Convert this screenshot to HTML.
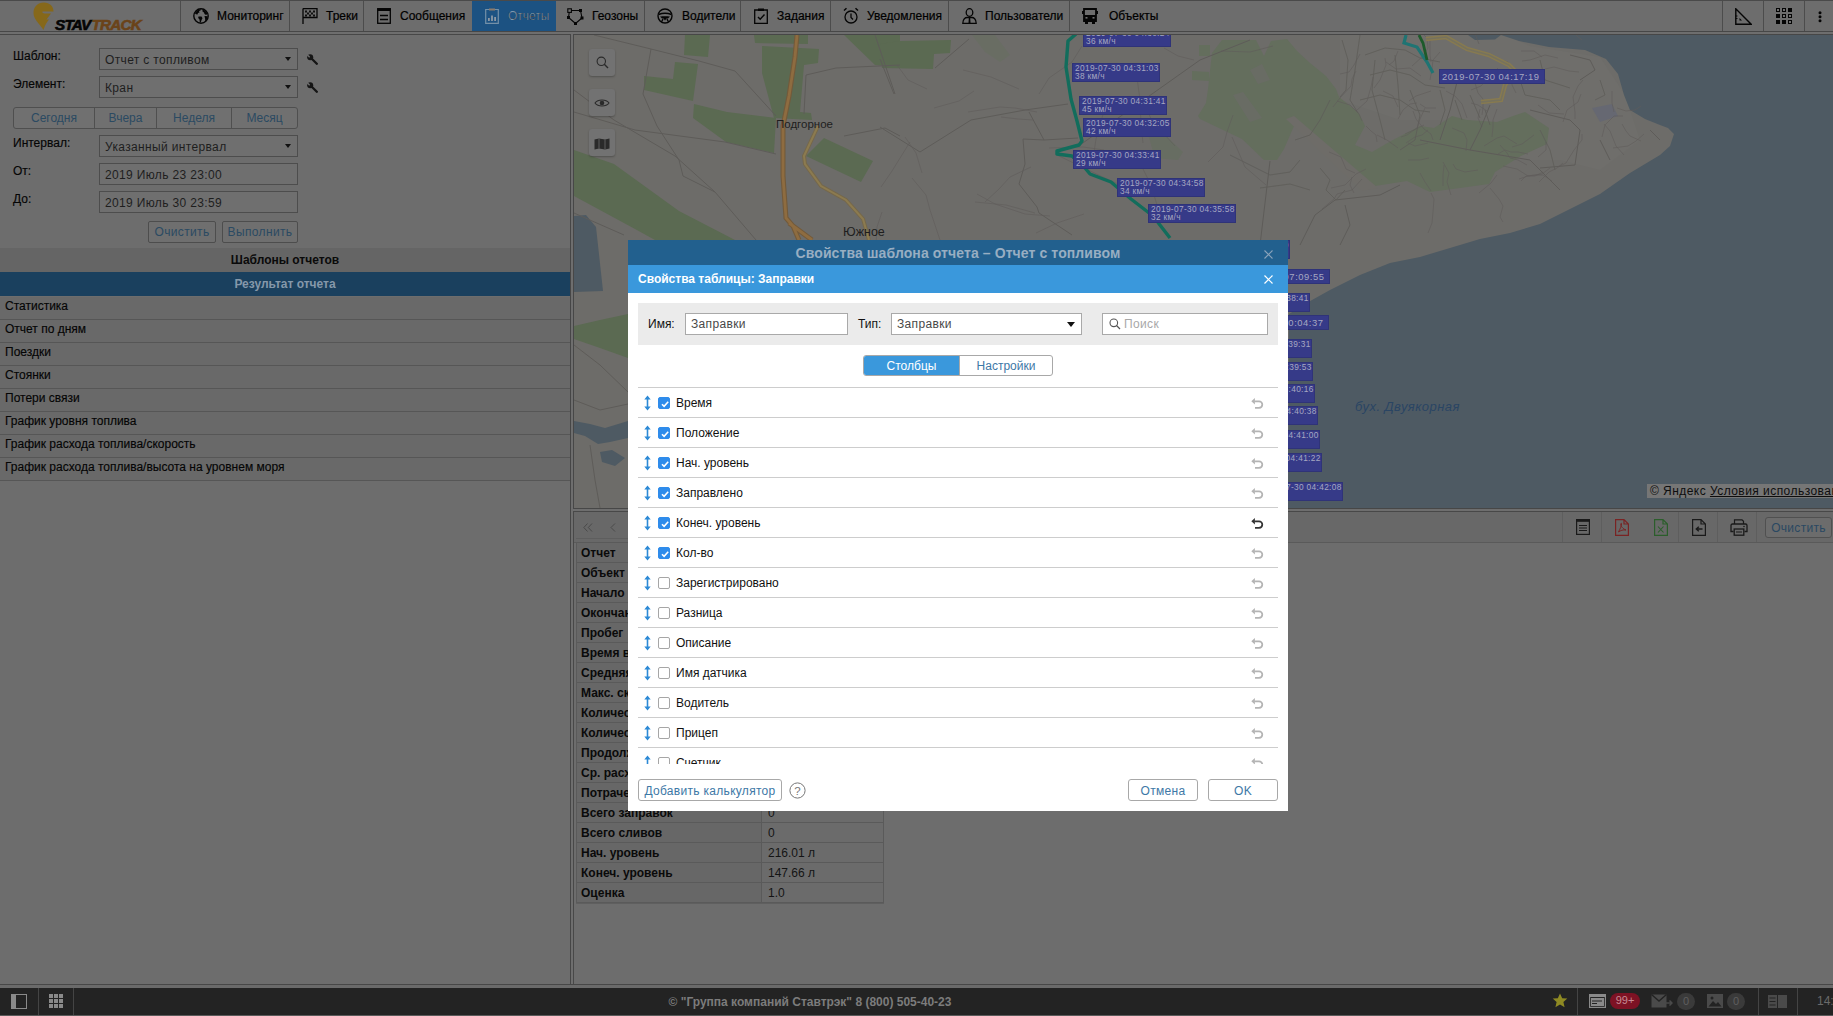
<!DOCTYPE html>
<html><head><meta charset="utf-8">
<style>
*{box-sizing:border-box;margin:0;padding:0}
html,body{width:1833px;height:1016px;overflow:hidden;background:#6e6e6e;font-family:"Liberation Sans",sans-serif;font-size:12px;color:#000}
.a{position:absolute}
/* nav */
#nav{left:0;top:0;width:1833px;height:32px;background:#6d6d6d;border-bottom:1px solid #474747}
.sep{position:absolute;top:1px;width:1px;height:30px;background:#4c4c4c}
.ni{position:absolute;top:9px;font-size:12px;color:#000;white-space:nowrap;-webkit-text-stroke:0.2px #000}
.ic{position:absolute}
/* left panel */
#lp{left:0;top:34px;width:571px;height:950px;background:#6d6d6d;border-top:1px solid #474747;border-right:1px solid #464646}
.lbl{position:absolute;left:13px;color:#050505;-webkit-text-stroke:0.15px #050505}
.inp{position:absolute;left:99px;width:199px;height:22px;border:1px solid #4d4d4d;background:#6f6f6f;color:#1e1e1e;padding:4px 0 0 5px;white-space:nowrap;letter-spacing:0.35px}
.dd{position:absolute;right:6px;top:8px;width:0;height:0;border-left:3px solid transparent;border-right:3px solid transparent;border-top:4px solid #111}
.btn{position:absolute;border:1px solid #4d4d4d;border-radius:2px;background:#6f6f6f;color:#2b4a62;text-align:center;letter-spacing:0.35px}
.li{position:absolute;left:0;width:570px;height:23px;background:#696969;border-bottom:1px solid #565656;padding:2px 0 0 5px;color:#050505;-webkit-text-stroke:0.15px #050505}
.th{left:2px;width:186px;height:20px;background:#676767;border:1px solid #5a5a5a;border-top:none;font-weight:bold;padding:3px 0 0 4px;color:#0a0a0a;white-space:nowrap;overflow:hidden}
.td{left:188px;width:122px;height:20px;background:#6b6b6b;border:1px solid #5a5a5a;border-top:none;border-left:none;padding:3px 0 0 6px;color:#141414}
.lbs{width:88px;height:19px;background:#363a88;border:1px solid #2f3378;color:#a6a8c2;font-size:8.3px;line-height:7.6px;padding:1px 0 0 2px;white-space:nowrap;overflow:hidden;letter-spacing:0.35px}
.lbb{height:15px;background:#363a88;border:1px solid #2f3378;color:#a6a8c2;font-size:9.4px;line-height:13px;padding:0 4px 0 2px;white-space:nowrap;letter-spacing:0.55px}
.dinp{height:22px;border:1px solid #a9a9a9;background:#fff;color:#484848;padding:3px 0 0 5px;letter-spacing:0.35px;white-space:nowrap}
.row{position:absolute;left:0;width:640px;height:30px;border-bottom:1px solid #cdcdcd}
.cbx{position:absolute;left:20px;top:9px;width:12px;height:12px;border:1px solid #a6a6a6;border-radius:2px;background:#fff}
.cbx.on{background:#2f8ceb;border-color:#2f8ceb}
.dbtn{height:22px;border:1px solid #a8a8a8;border-radius:3px;background:#fff;color:#3d78a6;text-align:center;padding-top:4px;letter-spacing:0.3px;white-space:nowrap}
</style></head><body>

<!-- NAV -->
<div id="nav" class="a">
  <div class="a" style="left:0;top:0;width:1833px;height:1px;background:#4a4a4a"></div>
  <!-- logo -->
  <svg class="ic" style="left:32px;top:1px" width="26" height="30" viewBox="0 0 26 30">
    <path d="M12 1.5 C5.5 1.5 1.5 6 1.5 12 C1.5 18 7 22 11.5 29 C13 24 15 21 17 18.5 L14.5 18.5 L19 12.5 L13 12.5 C11 12.5 10 11.5 10.5 10.5 L21.5 10.5 C21.5 5 17.5 1.5 12 1.5 Z" fill="#86681a"/>
  </svg>
  <div class="a" style="left:55px;top:17px;font:italic bold 14px 'Liberation Sans',sans-serif;letter-spacing:-0.7px;color:#050505;transform:scale(1.09,0.98);transform-origin:0 0;-webkit-text-stroke:0.6px #050505">STAV<span style="color:#6a4319;-webkit-text-stroke:0.6px #6a4319;margin-left:1px">TRACK</span></div>
  <div class="sep" style="left:180px"></div>
  <!-- globe -->
  <svg class="ic" style="left:193px;top:8px" width="16" height="16" viewBox="0 0 16 16">
    <circle cx="8" cy="8" r="7.2" fill="none" stroke="#050505" stroke-width="1.4"/>
    <path d="M2 5.5 C3 3 5 1.5 8 1.2 L7.5 2.5 L6 3 L6.5 4.5 L5 5 L4.5 6.5 L3 6.2 Z M5.5 8.5 L8.5 8.5 L9.5 10.2 L8.5 12 L7.8 14.5 L6.8 14.3 L6.5 11.5 L5.2 10 Z M9.5 1.5 C11.5 2 13.5 3.5 14.5 6 L13 7 L11.5 6 L11 4.5 L9.5 3.5 Z M11.5 8 L14.7 8.2 C14.6 10.5 13.5 12.5 12 13.5 L12.2 11 Z" fill="#050505"/>
  </svg>
  <div class="ni" style="left:217px">Мониторинг</div>
  <div class="sep" style="left:289px"></div>
  <!-- flag -->
  <svg class="ic" style="left:302px;top:8px" width="16" height="16" viewBox="0 0 16 16">
    <path d="M1 0.5 V16 M1 0.6 H15 V9.5 H1" fill="none" stroke="#050505" stroke-width="1.3"/>
    <path d="M3 2.5h2v2h-2z M7 2.5h2v2h-2z M11 2.5h2v2h-2z M5 4.5h2v2h-2z M9 4.5h2v2h-2z M3 6.5h2v2h-2z M7 6.5h2v2h-2z M11 6.5h2v2h-2z" fill="#050505" opacity=".9"/>
  </svg>
  <div class="ni" style="left:326px">Треки</div>
  <div class="sep" style="left:363px"></div>
  <!-- messages -->
  <svg class="ic" style="left:377px;top:8px" width="14" height="16" viewBox="0 0 14 16">
    <rect x="0.7" y="0.7" width="12.6" height="14.6" fill="none" stroke="#050505" stroke-width="1.3"/>
    <rect x="0.7" y="0.7" width="12.6" height="2.3" fill="#050505"/>
    <path d="M3 7.5 H11 M3 11.5 H11" stroke="#050505" stroke-width="1.3"/>
  </svg>
  <div class="ni" style="left:400px">Сообщения</div>
  <!-- reports (active) -->
  <div class="a" style="left:472px;top:1px;width:84px;height:30px;background:#1c5282"></div>
  <svg class="ic" style="left:485px;top:8px" width="14" height="16" viewBox="0 0 14 16">
    <path d="M0.7 1.5 H13.3 V15.3 H0.7 Z" fill="none" stroke="#7390a8" stroke-width="1.2"/>
    <path d="M4 0.5 H10 V2.5 H4 Z" fill="#8c7a6a"/>
    <path d="M3 10h1.8v3h-1.8z M6.1 7.5h1.8v5.5h-1.8z M9.2 9h1.8v4h-1.8z" fill="#8c98a5"/>
  </svg>
  <div class="ni" style="left:508px;color:#7f98ae">Отчеты</div>
  <!-- geozones -->
  <svg class="ic" style="left:567px;top:8px" width="17" height="17" viewBox="0 0 17 17">
    <path d="M2.5 2.5 L13.5 2.5 L15 10 L8.5 15.5 L1.5 9.5 Z" fill="none" stroke="#050505" stroke-width="1.1"/>
    <rect x="0.8" y="0.8" width="3.6" height="3.6" fill="#6f6f6f" stroke="#050505" stroke-width="1.1"/>
    <rect x="12" y="1" width="3" height="3" fill="#050505"/>
    <rect x="13.5" y="8.5" width="3" height="3" fill="#050505"/>
    <rect x="7" y="14" width="3" height="3" fill="#050505"/>
    <rect x="0" y="8" width="3" height="3" fill="#050505"/>
  </svg>
  <div class="ni" style="left:592px">Геозоны</div>
  <div class="sep" style="left:644px"></div>
  <!-- drivers -->
  <svg class="ic" style="left:657px;top:8px" width="16" height="16" viewBox="0 0 16 16">
    <circle cx="8" cy="8" r="7" fill="none" stroke="#050505" stroke-width="1.4"/>
    <path d="M1.5 6.5 C5 5.2 11 5.2 14.5 6.5" fill="none" stroke="#050505" stroke-width="1.6"/>
    <path d="M3 8.5 C5 8.2 11 8.2 13 8.5 L11 10.5 H9.5 L8 12.5 L6.5 10.5 H5 Z" fill="#050505"/>
    <path d="M6 11 L4.5 14 M10 11 L11.5 14" stroke="#050505" stroke-width="1.4"/>
  </svg>
  <div class="ni" style="left:682px">Водители</div>
  <div class="sep" style="left:740px"></div>
  <!-- tasks -->
  <svg class="ic" style="left:754px;top:8px" width="14" height="16" viewBox="0 0 14 16">
    <path d="M0.7 2 H13.3 V15.3 H0.7 Z" fill="none" stroke="#050505" stroke-width="1.3"/>
    <path d="M4 0.5 H10 V3 H4 Z" fill="#050505"/>
    <path d="M4 9 L6.2 11.3 L10.5 6.5" fill="none" stroke="#050505" stroke-width="1.4"/>
  </svg>
  <div class="ni" style="left:777px">Задания</div>
  <div class="sep" style="left:830px"></div>
  <!-- notifications -->
  <svg class="ic" style="left:843px;top:7px" width="16" height="17" viewBox="0 0 16 17">
    <circle cx="8" cy="10" r="6" fill="none" stroke="#050505" stroke-width="1.3"/>
    <path d="M8 6.5 V10.5 L10 12.5" fill="none" stroke="#050505" stroke-width="1.3"/>
    <path d="M1 3.5 L3.5 1.2 M15 3.5 L12.5 1.2" stroke="#050505" stroke-width="1.5"/>
  </svg>
  <div class="ni" style="left:867px">Уведомления</div>
  <div class="sep" style="left:948px"></div>
  <!-- users -->
  <svg class="ic" style="left:962px;top:8px" width="15" height="16" viewBox="0 0 15 16">
    <ellipse cx="7.5" cy="4.5" rx="3.3" ry="3.8" fill="none" stroke="#050505" stroke-width="1.3"/>
    <path d="M0.8 15.3 C0.8 11 3.5 9.5 5 9.5 H10 C11.5 9.5 14.2 11 14.2 15.3 Z" fill="none" stroke="#050505" stroke-width="1.3"/>
    <path d="M6.8 10 H8.2 L8.5 15 H6.5 Z" fill="#050505"/>
  </svg>
  <div class="ni" style="left:985px">Пользователи</div>
  <div class="sep" style="left:1069px"></div>
  <!-- objects -->
  <svg class="ic" style="left:1082px;top:8px" width="16" height="16" viewBox="0 0 16 16">
    <path d="M2 1 H14 V13 H2 Z" fill="none" stroke="#050505" stroke-width="1.8"/>
    <path d="M2 7 H14 V13 H2 Z" fill="#050505"/>
    <path d="M0 3 H2 V6 H0 Z M14 3 H16 V6 H14 Z M3 13 H6 V16 H3 Z M10 13 H13 V16 H10 Z" fill="#050505"/>
    <rect x="3.5" y="9" width="2" height="1.6" fill="#6f6f6f"/><rect x="10.5" y="9" width="2" height="1.6" fill="#6f6f6f"/>
  </svg>
  <div class="ni" style="left:1109px">Объекты</div>
  <!-- right -->
  <div class="sep" style="left:1722px"></div>
  <svg class="ic" style="left:1735px;top:8px" width="17" height="17" viewBox="0 0 17 17">
    <path d="M0.8 0.8 V16.2 H16.2 Z" fill="none" stroke="#050505" stroke-width="1.4"/>
    <path d="M4.5 10 L4.5 12.5 L7 12.5 Z" fill="#050505"/>
    <path d="M0.8 8 H2.5 M0.8 10.5 H2.5" stroke="#050505" stroke-width="0.9"/>
  </svg>
  <div class="sep" style="left:1763px"></div>
  <svg class="ic" style="left:1776px;top:8px" width="17" height="17" viewBox="0 0 17 17">
    <g fill="#050505">
    <rect x="0" y="0" width="4" height="4"/><rect x="6" y="0" width="4" height="4"/><rect x="12" y="0" width="4" height="4"/>
    <rect x="0" y="6" width="4" height="4"/><rect x="6" y="6" width="4" height="4"/><rect x="12" y="6" width="4" height="4"/>
    <rect x="0" y="12" width="4" height="4"/><rect x="6" y="12" width="4" height="4"/><rect x="12" y="12" width="4" height="4"/>
    </g>
    <g fill="#8c8c8c"><rect x="1.1" y="1.1" width="1.8" height="1.8"/><rect x="7.1" y="1.1" width="1.8" height="1.8"/><rect x="7.1" y="7.1" width="1.8" height="1.8"/><rect x="13.1" y="7.1" width="1.8" height="1.8"/><rect x="13.1" y="13.1" width="1.8" height="1.8"/></g>
  </svg>
  <div class="sep" style="left:1804px"></div>
  <svg class="ic" style="left:1817px;top:11px" width="6" height="12" viewBox="0 0 6 12">
    <circle cx="3" cy="1.7" r="1.5" fill="#050505"/><circle cx="3" cy="5.7" r="1.5" fill="#050505"/><circle cx="3" cy="9.7" r="1.5" fill="#050505"/>
  </svg>
</div>


<!-- LEFT PANEL -->
<div id="lp" class="a">
  <div class="lbl" style="top:14px">Шаблон:</div>
  <div class="inp" style="top:13px">Отчет с топливом<div class="dd"></div></div>
  <svg class="ic" style="left:306px;top:18px" width="12" height="12" viewBox="0 0 12 12"><path d="M5.5 5.5 L10.8 10.8" stroke="#151515" stroke-width="2.3" stroke-linecap="round"/><circle cx="4.2" cy="4.2" r="3" fill="#151515"/><path d="M1.2 1.8 L3.2 3.8" stroke="#6d6d6d" stroke-width="1.6" stroke-linecap="round"/></svg>
  <div class="lbl" style="top:42px">Элемент:</div>
  <div class="inp" style="top:41px">Кран<div class="dd"></div></div>
  <svg class="ic" style="left:306px;top:46px" width="12" height="12" viewBox="0 0 12 12"><path d="M5.5 5.5 L10.8 10.8" stroke="#151515" stroke-width="2.3" stroke-linecap="round"/><circle cx="4.2" cy="4.2" r="3" fill="#151515"/><path d="M1.2 1.8 L3.2 3.8" stroke="#6d6d6d" stroke-width="1.6" stroke-linecap="round"/></svg>
  <div class="a" style="left:13px;top:72px;width:285px;height:22px;border:1px solid #4f4f4f;border-radius:3px;background:#707070">
    <div class="a" style="left:0;top:0;width:81px;height:20px;border-right:1px solid #4f4f4f;color:#2b4a62;text-align:center;padding-top:3px">Сегодня</div>
    <div class="a" style="left:81px;top:0;width:62px;height:20px;border-right:1px solid #4f4f4f;color:#2b4a62;text-align:center;padding-top:3px">Вчера</div>
    <div class="a" style="left:143px;top:0;width:75px;height:20px;border-right:1px solid #4f4f4f;color:#2b4a62;text-align:center;padding-top:3px">Неделя</div>
    <div class="a" style="left:218px;top:0;width:65px;height:20px;color:#2b4a62;text-align:center;padding-top:3px">Месяц</div>
  </div>
  <div class="lbl" style="top:101px">Интервал:</div>
  <div class="inp" style="top:100px">Указанный интервал<div class="dd"></div></div>
  <div class="lbl" style="top:129px">От:</div>
  <div class="inp" style="top:128px">2019 Июль 23 23:00</div>
  <div class="lbl" style="top:157px">До:</div>
  <div class="inp" style="top:156px">2019 Июль 30 23:59</div>
  <div class="btn" style="left:148px;top:186px;width:68px;height:22px;padding-top:3px">Очистить</div>
  <div class="btn" style="left:222px;top:186px;width:76px;height:22px;padding-top:3px">Выполнить</div>
  <div class="a" style="left:0;top:213px;width:570px;height:24px;background:#656565;text-align:center;font-weight:bold;padding-top:5px;color:#0a0a0a">Шаблоны отчетов</div>
  <div class="a" style="left:0;top:237px;width:570px;height:24px;background:#1a405e;text-align:center;font-weight:bold;padding-top:5px;color:#8598aa">Результат отчета</div>
  <div class="li" style="top:262px">Статистика</div>
  <div class="li" style="top:285px">Отчет по дням</div>
  <div class="li" style="top:308px">Поездки</div>
  <div class="li" style="top:331px">Стоянки</div>
  <div class="li" style="top:354px">Потери связи</div>
  <div class="li" style="top:377px">График уровня топлива</div>
  <div class="li" style="top:400px">График расхода топлива/скорость</div>
  <div class="li" style="top:423px">График расхода топлива/высота на уровнем моря</div>
</div>


<!-- MAP -->
<div id="map" class="a" style="left:573px;top:34px;width:1260px;height:475px;background:#6d6c69;border-top:1px solid #474747;border-left:1px solid #474747;border-bottom:1px solid #474747;overflow:hidden">
<svg class="a" style="left:0;top:0" width="1260" height="474" viewBox="574 35 1260 474">
 <rect x="574" y="35" width="1260" height="474" fill="#6d6c69"/>
 <!-- urban tint -->
 <path d="M1340 35 L1505 35 L1530 46 L1600 57 L1625 95 L1640 140 L1600 170 L1560 160 L1520 160 L1470 120 L1400 120 L1340 100 Z" fill="#6f6e6b"/>
 <!-- sea -->
 <path d="M1468 35 L1501 35 L1519 41 L1549 47 L1585 50 L1606 59 L1618 74 L1624 95 L1630 110 L1645 119 L1660 125 L1668 128 L1674 134 L1670 146 L1660 155 L1630 173 L1600 194 L1570 209 L1540 224 L1510 233 L1480 239 L1450 248 L1420 257 L1390 263 L1360 275 L1330 290 L1312 300 L1289 314 L1288 509 L1834 509 L1834 35 Z" fill="#4e5a63"/>
 <path d="M1468 35 L1501 35 L1495 39.5 L1475 40 Z" fill="#4e5a63"/>
 <!-- green fields -->
 <g fill="#5b6a52">
  <path d="M685 35 L710 35 L708 57 L684 55 Z"/>
  <path d="M644 76 L673 79 L675 62 L698 64 L693 101 L644 90 Z"/>
  <path d="M694 104 L727 112 L776 118 L774 153 L726 142 L693 118 Z"/>
  <path d="M762 46 L819 49 L818 63 L804 65 L800 112 L811 113 L812 120 L774 118 L762 73 Z"/>
  <path d="M754 35 L808 35 L808 44 L755 43 Z"/>
  <path d="M824 138 L873 161 L861 182 L806 156 Z"/>
  <path d="M844 35 L900 35 L900 67 L875 65 Z"/>
  <path d="M574 150 L614 164 L679 211 L735 240 L760 260 L700 270 L655 240 L635 229 L574 196 Z"/>
  <path d="M880 44 L900 41 L951 40 L950 53 L934 54 L933 69 L882 68 Z"/>
  <path d="M574 326 L600 320 L628 314 L628 358 L600 348 L574 339 Z"/>
 </g>
 <g fill="#646e5d">
  <path d="M1198 116 L1206 103 L1208 89 L1212 53 L1222 40 L1256 40 L1264 56 L1271 41 L1287 39 L1297 51 L1310 63 L1326 76 L1336 89 L1339 97 L1359 113 L1365 126 L1355 145 L1372 152 L1391 141 L1420 126 L1434 128 L1452 116 L1467 120 L1497 122 L1513 116 L1525 112 L1549 128 L1547 144 L1521 156 L1495 172 L1489 184 L1460 188 L1430 192 L1407 181 L1375 186 L1362 178 L1346 162 L1318 141 L1294 126 L1284 149 L1277 160 L1264 160 L1242 139 L1200 119 Z"/>
  <path d="M1199 45 L1210 45 L1210 56 L1199 56 Z M1192 71 L1209 72 L1209 81 L1192 80 Z"/>
  <path d="M972 35 L995 35 L1010 55 L1000 62 L985 52 Z" opacity=".45"/>
  <path d="M1148 134 L1160 130 L1183 152 L1178 160 L1155 158 Z" opacity=".6"/>
 </g>
 <path d="M1286 119 L1294 116 L1378 188 L1362 191 Z" fill="#6e6c68"/>
 <path d="M1233 95 L1243 92 L1262 118 L1250 122 Z M1250 70 L1262 64 L1270 80 L1258 84 Z" fill="#6a6c66" opacity=".8"/>
 <!-- lakes -->
 <path d="M574 216 L586 215 L596 227 L603 291 L574 292 Z" fill="#4e5a63"/>
 <path d="M574 421 L590 424 L605 428 L628 421 L628 438 L610 442 L598 444 L585 436 L574 433 Z M600 452 L612 450 L625 458 L615 466 L602 462 Z" fill="#4e5a63"/>
 <path d="M574 345 L600 365 L628 392" fill="none" stroke="#5e5c59" stroke-width="1"/>
 <path d="M574 400 L600 410 L628 404 M590 445 L595 480 L600 508" fill="none" stroke="#5e5c59" stroke-width="1"/>
 <path d="M1592 108 L1612 104 L1618 116 L1600 122 Z" fill="#666872"/>
 <!-- thin roads -->
 <g fill="none" stroke="#5e5c59" stroke-width="1">
  <path d="M594 35 L651 49 L699 61 L735 71 L776 116"/>
  <path d="M651 49 L643 94 L657 126 L679 160 L683 176 L715 192 L756 240"/>
  <path d="M574 112 L635 130 L725 142 L776 154"/>
  <path d="M574 90 L614 120 L675 156 L715 192"/>
  <path d="M804 114 L806 75 L836 68 L900 65"/>
  <path d="M844 136 L885 128 L900 136"/>
  <path d="M875 35 L895 94"/>
  <path d="M574 213 L624 235"/>
  <path d="M880 127 L920 152 L971 120 L1025 110 L1068 104"/>
  <path d="M1029 112 L1044 140 L1023 139 L1025 164 L1019 184 L1037 207 L1039 213 L1072 235"/>
  <path d="M1044 140 L1078 138"/>
  <path d="M935 68 L969 39"/>
  <path d="M880 59 L894 94"/>
  <path d="M1270 161 L1260 245"/>
  <path d="M1300 245 L1315 215 L1335 200 L1380 195 L1400 185"/>
  <path d="M1340 245 L1350 225 L1345 205"/>
  <path d="M1080 145 L1200 60 L1250 40"/>
  <path d="M1420 140 L1470 150 L1530 160 L1560 190"/>
  <path d="M1530 110 L1570 120 L1580 130 L1575 165 L1540 168"/>
  <path d="M1600 140 L1605 150 L1610 160"/>
  <path d="M1650 130 L1660 140"/>
  <path d="M1570 55 L1590 60 L1595 70 L1580 80"/>
  <path d="M1460 70 L1450 110 L1440 140 M1490 105 L1480 130 L1470 150"/>
 </g>
 <g fill="none" stroke="#5f5d59" stroke-width="0.9" opacity=".9">
  <path d="M1342 40 L1348 60 L1346 90 L1340 97"/>
  <path d="M1360 35 L1355 70 L1350 100 L1358 113"/>
  <path d="M1365 55 L1385 48 L1405 50 L1420 58 L1440 62"/>
  <path d="M1370 75 L1390 70 L1410 75 L1425 85 L1445 88"/>
  <path d="M1360 100 L1380 95 L1400 100 L1415 110 L1430 112"/>
  <path d="M1375 60 L1372 90 L1380 120 L1385 140"/>
  <path d="M1395 55 L1398 85 L1400 115"/>
  <path d="M1410 90 L1420 115 L1415 140 L1400 150"/>
  <path d="M1440 90 L1445 110 L1440 125"/>
  <path d="M1455 100 L1462 120 M1470 95 L1480 118 M1485 110 L1490 125"/>
  <path d="M1520 80 L1525 95 L1550 100 L1560 110 M1540 60 L1545 80 L1570 88"/>
  <path d="M1330 100 L1320 120 L1310 135 L1295 140"/>
  <path d="M1230 155 L1250 165 L1270 175 L1290 172 L1300 160"/>
  <path d="M1320 168 L1330 180 L1326 190 L1336 200 L1345 190"/>
  <path d="M1260 188 L1290 184 L1310 190"/>
  <path d="M1540 130 L1550 150 L1555 170"/>
  <path d="M1600 80 L1605 95 L1595 100"/>
 </g>
 <!-- mesh --><g fill="none" stroke="#5f5d5a" stroke-width="0.8" opacity=".75"><path d="M1431 62 L1430 55 L1430 40 M1398 51 L1394 61 L1389 65 M1401 137 L1407 135 L1417 128 L1420 119 L1425 108 M1500 145 L1507 153 L1510 158 L1518 160 L1527 165 M1428 130 L1422 135 L1415 137 L1406 143 M1436 108 L1426 108 L1420 104 M1479 44 L1474 31 L1465 21 L1459 11 L1451 -1 M1614 112 L1612 103 L1612 91 M1466 151 L1467 140 L1464 133 L1452 128 M1373 77 L1371 87 L1367 101 L1356 111 M1417 103 L1410 104 L1403 110 L1398 119 M1509 79 L1521 80 L1528 79 L1542 84 M1528 154 L1518 152 L1511 152 L1505 150 L1498 154 M1383 91 L1393 96 L1398 107 M1356 71 L1352 79 L1351 86 L1340 98 L1333 107 M1360 54 L1354 65 L1349 72 L1340 74 M1539 182 L1549 172 L1557 168 L1563 163 M1563 122 L1567 110 L1578 102 L1581 94 M1453 164 L1456 169 L1465 172 L1478 170 M1617 108 L1626 111 L1635 110 L1641 106 M1519 179 L1528 176 L1542 174 L1550 168 M1545 69 L1554 67 L1569 71 L1579 72 M1385 58 L1386 65 L1380 80 L1374 88 M1497 59 L1508 62 L1513 71 L1512 85 L1516 93 M1421 76 L1410 68 L1396 69 L1386 62 M1575 119 L1575 112 L1573 97 L1578 86 L1583 80 M1377 135 L1387 140 L1398 148 M1366 126 L1371 131 L1376 135 L1377 142 M1431 191 L1425 182 L1420 173 M1613 148 L1628 146 L1636 141 L1644 134 M1428 143 L1415 146 L1408 143 M1546 142 L1546 150 L1538 157 M1479 193 L1491 183 L1497 175 M1440 52 L1433 60 L1432 69 L1430 80 M1354 193 L1350 185 L1352 177 M1558 167 L1566 163 L1574 150 L1582 140 L1582 134 M1538 105 L1549 113 L1564 114 M1355 173 L1346 169 L1341 157 L1329 152 M1412 66 L1422 57 L1428 48 L1427 38 L1421 32 M1498 68 L1488 78 L1481 86 L1471 90 M1484 146 L1497 138 L1504 136 L1517 144 M1582 40 L1577 36 L1571 28 L1562 15 M1512 147 L1522 144 L1534 135 M1622 124 L1626 131 L1630 136 L1641 141 M1408 160 L1420 160 L1429 158 M1521 51 L1534 51 L1542 57 M1431 193 L1434 199 L1433 212 L1432 223 L1428 233 M1503 166 L1517 169 L1528 176 L1535 176 L1543 172 M1366 169 L1356 174 L1350 180 L1345 185 L1331 188 M1362 121 L1359 114 L1350 105 L1337 101 M1623 116 L1614 116 L1605 125 L1602 137 M1433 140 L1431 134 L1424 129 L1416 119 L1413 111 M1487 111 L1478 105 L1471 103 M1475 83 L1478 93 L1483 99 L1483 108 L1482 115 M1490 188 L1499 199 L1503 206 L1500 217 L1503 222 M1480 109 L1478 118 L1482 127 M1431 91 L1416 96 L1409 101 M1451 195 L1447 182 L1449 173 L1443 162 M1522 61 L1530 60 L1545 55 L1558 58 M1521 181 L1526 176 L1536 175 L1543 175 L1552 181 M1604 124 L1610 131 L1616 146 L1624 155 M1424 125 L1418 128 L1405 134 M1497 109 L1493 120 L1493 127 L1492 137 M1444 165 L1443 175 L1443 186 M1446 91 L1455 96 L1462 104 L1467 118 M1362 179 L1352 190 L1337 194 L1334 199 L1322 209 M1055 154 L1086 169 L1107 179 L1136 192 M963 70 L991 77 L1019 89 M1049 148 L1083 147 L1104 150 M927 89 L908 80 L897 65 M977 194 L995 204 L1025 214 L1050 216 M1082 46 L1072 62 L1049 78 L1039 94 M1037 112 L1015 108 L1000 107 L968 112 M905 137 L916 153 L922 173 M1232 137 L1245 167 L1266 185 M1221 51 L1250 52 L1273 46 M1143 101 L1152 121 L1175 146 M1156 46 L1149 12 L1145 -4 L1135 -17 M1035 213 L1006 205 L975 202 M912 178 L926 195 L930 210 L940 240 M1164 48 L1178 56 L1194 60 M1104 111 L1096 139 L1093 159 M881 187 L892 171 L910 142 M1233 115 L1227 132 L1223 147 L1208 162 M1136 70 L1140 100 L1141 125 L1143 143 M1031 167 L1010 177 L999 189 L985 202 M1036 233 L1057 223 L1084 214 M1157 205 L1151 185 L1142 167 M974 91 L959 101 L934 108 M1001 117 L1018 119 L1033 120 M882 212 L877 227 L876 245 L883 278"/></g>
 <!-- /mesh -->
 <!-- yellow roads -->
 <path d="M818 126 L804 156 L805 164 L821 186 L846 200 L863 219 L869 240" fill="none" stroke="#76684a" stroke-width="4"/><path d="M818 126 L804 156 L805 164 L821 186 L846 200 L863 219 L869 240" fill="none" stroke="#8c7b50" stroke-width="2"/>
 <path d="M797 35 L795 57 L789 96 L783 126 L783 176 L786 218 L793 226 L799 240 M789 223 L812 240" fill="none" stroke="#735a3a" stroke-width="5"/><path d="M797 35 L795 57 L789 96 L783 126 L783 176 L786 218 L793 226 L799 240 M789 223 L812 240" fill="none" stroke="#8e6c40" stroke-width="2.8"/>
 <path d="M1426 39 L1446 37 L1467 49 L1489 55 L1509 65 L1515 71 L1505 85 L1501 100 L1481 102" fill="none" stroke="#877a50" stroke-width="4.5"/>
 <path d="M1426 39 L1446 37 L1467 49 L1489 55 L1509 65 L1515 71 L1505 85 L1501 100 L1481 102" fill="none" stroke="#76725e" stroke-width="1.5"/>
 <!-- tracks -->
 <path d="M1406 35 L1404 43 L1417 47 L1427 62 L1433 73" fill="none" stroke="#1f7473" stroke-width="3.2"/>
 <path d="M1419 35 L1423 43 L1427 60" fill="none" stroke="#1d5a2a" stroke-width="2.8"/>
 <path d="M1076 34 L1068 41 L1066 67 L1071 99 L1077 121 L1082 141 L1079 145 L1057 151 L1057 154 L1072 156 L1085 168 L1090 174 L1111 182 L1131 199 L1153 216 L1170 238" fill="none" stroke="#126d5c" stroke-width="3.4" stroke-linejoin="round"/>
 <!-- place labels -->
 <text x="776" y="128" font-family="Liberation Sans" font-size="11.5" fill="#1e1e1e">Подгорное</text>
 <text x="843" y="236" font-family="Liberation Sans" font-size="12.5" fill="#1e1e1e">Южное</text>
 <text x="1355" y="411" font-family="Liberation Sans" font-style="italic" font-size="13" letter-spacing="0.45" fill="#2a4563">бух. Двуякорная</text>
</svg>
 <!-- maplabels -->
<div class="a lbs" style="left:509px;top:-7px">2019-07-30 04:30:24<br>36 км/ч</div>
<div class="a lbs" style="left:498px;top:28px">2019-07-30 04:31:03<br>38 км/ч</div>
<div class="a lbs" style="left:505px;top:61px">2019-07-30 04:31:41<br>45 км/ч</div>
<div class="a lbs" style="left:509px;top:83px">2019-07-30 04:32:05<br>42 км/ч</div>
<div class="a lbs" style="left:499px;top:115px">2019-07-30 04:33:41<br>29 км/ч</div>
<div class="a lbs" style="left:543px;top:143px">2019-07-30 04:34:58<br>34 км/ч</div>
<div class="a lbs" style="left:574px;top:169px">2019-07-30 04:35:58<br>32 км/ч</div>
<div class="a lbs" style="left:628px;top:205px">2019-07-30 04:36:40<br>30 км/ч</div>
<div class="a lbs" style="left:648px;top:258px">2019-07-30 04:38:41<br>28 км/ч</div>
<div class="a lbs" style="left:650px;top:304px">2019-07-30 04:39:31<br>27 км/ч</div>
<div class="a lbs" style="left:651px;top:327px">2019-07-30 04:39:53<br>25 км/ч</div>
<div class="a lbs" style="left:653px;top:349px">2019-07-30 04:40:16<br>26 км/ч</div>
<div class="a lbs" style="left:656px;top:371px">2019-07-30 04:40:38<br>24 км/ч</div>
<div class="a lbs" style="left:658px;top:395px">2019-07-30 04:41:00<br>22 км/ч</div>
<div class="a lbs" style="left:660px;top:418px">2019-07-30 04:41:22<br>21 км/ч</div>
<div class="a lbs" style="left:681px;top:447px">2019-07-30 04:42:08<br>20 км/ч</div>
<div class="a lbb" style="left:865px;top:34px">2019-07-30 04:17:19</div>
<div class="a lbb" style="left:650px;top:234px">2019-07-30 07:09:55</div>
<div class="a lbb" style="left:649px;top:280px">2019-07-30 10:04:37</div>
<div class="a" style="left:1073px;top:449px;width:190px;height:14px;background:#767676;color:#0e0e0e;font-size:12px;padding:0 0 0 3px;white-space:nowrap;letter-spacing:0.45px;line-height:14px">© Яндекс <u>Условия использования</u></div>
<!-- /maplabels -->
 <!-- map buttons -->
 <div class="a" style="left:15px;top:14px;width:26px;height:27px;background:#727272;border-radius:3px;box-shadow:0 1px 2px rgba(0,0,0,.25)"></div>
 <div class="a" style="left:15px;top:54px;width:26px;height:27px;background:#727272;border-radius:3px;box-shadow:0 1px 2px rgba(0,0,0,.25)"></div>
 <div class="a" style="left:15px;top:94px;width:26px;height:27px;background:#727272;border-radius:3px;box-shadow:0 1px 2px rgba(0,0,0,.25)"></div>
 <svg class="a" style="left:22px;top:21px" width="13" height="13" viewBox="0 0 13 13"><circle cx="5.3" cy="5.3" r="4.2" fill="none" stroke="#2a2a2a" stroke-width="1.1"/><path d="M8.3 8.3 L12 12" stroke="#2a2a2a" stroke-width="1.4"/></svg>
 <svg class="a" style="left:20px;top:63px" width="16" height="10" viewBox="0 0 16 10"><path d="M1 5 C4 1 12 1 15 5 C12 9 4 9 1 5 Z" fill="none" stroke="#2a2a2a" stroke-width="1.1"/><circle cx="8" cy="5" r="2.3" fill="#2a2a2a"/></svg>
 <svg class="a" style="left:20px;top:103px" width="16" height="12" viewBox="0 0 16 12"><path d="M0.5 1.5 L5 0.5 L11 1.5 L15.5 0.5 V10.5 L11 11.5 L5 10.5 L0.5 11.5 Z" fill="#2a2a2a"/><path d="M5 0.5 V10.5 M11 1.5 V11.5" stroke="#6a6a6a" stroke-width=".8"/></svg>
</div>


<!-- RESULTS -->
<div id="res" class="a" style="left:573px;top:511px;width:1260px;height:473px;background:#6d6d6d;border-top:1px solid #484848;border-left:1px solid #484848">
 <div class="a" style="left:0;top:0;width:1259px;height:31px;background:#686868;border-bottom:1px solid #5a5a5a"></div>
 <div class="a" style="left:2px;top:26px;width:52px;height:1px;background:#5e5e5e"></div>
 <svg class="a" style="left:9px;top:11px" width="10" height="9" viewBox="0 0 10 9"><path d="M4.5 0.5 L0.8 4.5 L4.5 8.5 M9 0.5 L5.3 4.5 L9 8.5" fill="none" stroke="#4a4a4a" stroke-width="1"/></svg>
 <svg class="a" style="left:36px;top:11px" width="6" height="9" viewBox="0 0 6 9"><path d="M5 0.5 L1 4.5 L5 8.5" fill="none" stroke="#4a4a4a" stroke-width="1"/></svg>
 <div class="a" style="left:2px;top:31px;width:308px;height:361px;background:#5f5f5f"></div>
 <div class="a th" style="top:31px">Отчет</div><div class="a td" style="top:31px"></div>
 <div class="a th" style="top:51px">Объект</div><div class="a td" style="top:51px"></div>
 <div class="a th" style="top:71px">Начало</div><div class="a td" style="top:71px"></div>
 <div class="a th" style="top:91px">Окончание</div><div class="a td" style="top:91px"></div>
 <div class="a th" style="top:111px">Пробег</div><div class="a td" style="top:111px"></div>
 <div class="a th" style="top:131px">Время в движении</div><div class="a td" style="top:131px"></div>
 <div class="a th" style="top:151px">Средняя скорость</div><div class="a td" style="top:151px"></div>
 <div class="a th" style="top:171px">Макс. скорость</div><div class="a td" style="top:171px"></div>
 <div class="a th" style="top:191px">Количество</div><div class="a td" style="top:191px"></div>
 <div class="a th" style="top:211px">Количество</div><div class="a td" style="top:211px"></div>
 <div class="a th" style="top:231px">Продолжительность</div><div class="a td" style="top:231px"></div>
 <div class="a th" style="top:251px">Ср. расход</div><div class="a td" style="top:251px"></div>
 <div class="a th" style="top:271px">Потрачено</div><div class="a td" style="top:271px"></div>
 <div class="a th" style="top:291px">Всего заправок</div><div class="a td" style="top:291px">0</div>
 <div class="a th" style="top:311px">Всего сливов</div><div class="a td" style="top:311px">0</div>
 <div class="a th" style="top:331px">Нач. уровень</div><div class="a td" style="top:331px">216.01 л</div>
 <div class="a th" style="top:351px">Конеч. уровень</div><div class="a td" style="top:351px">147.66 л</div>
 <div class="a th" style="top:371px">Оценка</div><div class="a td" style="top:371px">1.0</div>
 <div class="a" style="left:988px;top:0;width:1px;height:30px;background:#5e5e5e"></div>
 <div class="a" style="left:1027px;top:0;width:1px;height:30px;background:#5e5e5e"></div>
 <div class="a" style="left:1104px;top:0;width:1px;height:30px;background:#5e5e5e"></div>
 <div class="a" style="left:1143px;top:0;width:1px;height:30px;background:#5e5e5e"></div>
 <div class="a" style="left:1182px;top:0;width:1px;height:30px;background:#5e5e5e"></div>
 <svg class="a" style="left:1002px;top:7px" width="14" height="16" viewBox="0 0 14 16"><rect x="0.6" y="0.6" width="12.8" height="14.8" fill="none" stroke="#1a1a1a" stroke-width="1.2"/><rect x="0.6" y="0.6" width="12.8" height="2.2" fill="#1a1a1a"/><path d="M3 6.5 H11 M3 9 H11 M3 11.5 H11" stroke="#1a1a1a" stroke-width="1.1"/></svg>
 <svg class="a" style="left:1041px;top:7px" width="14" height="17" viewBox="0 0 14 17"><path d="M0.6 0.6 H9 L13.4 5 V16.4 H0.6 Z M9 0.6 V5 H13.4" fill="none" stroke="#7a2323" stroke-width="1.2"/><path d="M3.5 13 C5 10 6.5 7 6.5 5 C6.5 4 6 4 5.8 5 C5.5 7 8 10 11 11 C8 10.5 5.5 11.5 3.5 13 Z" fill="none" stroke="#7a2323" stroke-width="1"/></svg>
 <svg class="a" style="left:1080px;top:7px" width="14" height="17" viewBox="0 0 14 17"><path d="M0.6 0.6 H9 L13.4 5 V16.4 H0.6 Z M9 0.6 V5 H13.4" fill="none" stroke="#2b5e2b" stroke-width="1.2"/><path d="M4 7.5 L9.5 13.5 M9.5 7.5 L4 13.5" stroke="#2b5e2b" stroke-width="1.1"/></svg>
 <svg class="a" style="left:1118px;top:7px" width="14" height="17" viewBox="0 0 14 17"><path d="M0.6 0.6 H9 L13.4 5 V16.4 H0.6 Z M9 0.6 V5 H13.4" fill="none" stroke="#1a1a1a" stroke-width="1.2"/><path d="M10.5 10 H4.5 M6.8 7.8 L4.3 10 L6.8 12.2" fill="none" stroke="#1a1a1a" stroke-width="1.4"/></svg>
 <svg class="a" style="left:1156px;top:7px" width="18" height="17" viewBox="0 0 18 17"><path d="M4.5 5 V0.8 H12 L13.5 2.3 V5" fill="none" stroke="#1a1a1a" stroke-width="1.2"/><path d="M3.5 12.5 H1 V6.5 C1 5.5 1.5 5 2.5 5 H15.5 C16.5 5 17 5.5 17 6.5 V12.5 H14.5" fill="none" stroke="#1a1a1a" stroke-width="1.3"/><rect x="4.2" y="10" width="9.6" height="6.2" fill="none" stroke="#1a1a1a" stroke-width="1.3"/><path d="M6 13 H12" stroke="#1a1a1a" stroke-width="1"/><circle cx="14" cy="7.5" r=".8" fill="#1a1a1a"/></svg>
 <div class="a" style="left:1191px;top:5px;width:67px;height:21px;border:1px solid #505050;border-radius:3px;background:#6c6c6c;color:#2a4862;text-align:center;padding-top:3px;letter-spacing:0.3px">Очистить</div>
</div>

<!-- BOTTOM BAR -->
<div id="bot" class="a" style="left:0;top:984px;width:1833px;height:32px;background:#232323;border-top:1px solid #474747">
 <div class="a" style="left:0;top:0;width:1833px;height:3px;background:#6a6a6a"></div>
 <div class="a" style="left:0;top:30px;width:1833px;height:1px;background:#5a5a5a"></div>
 <div class="a" style="left:38px;top:3px;width:1px;height:27px;background:#444"></div>
 <div class="a" style="left:73px;top:3px;width:1px;height:27px;background:#444"></div>
 <svg class="a" style="left:11px;top:9px" width="16" height="15" viewBox="0 0 16 15"><rect x="0.5" y="0.5" width="15" height="14" fill="none" stroke="#8a8a8a" stroke-width="1"/><rect x="0.5" y="0.5" width="4.5" height="14" fill="#8a8a8a"/></svg>
 <svg class="a" style="left:49px;top:9px" width="14" height="15" viewBox="0 0 14 15"><g fill="#8a8a8a"><rect x="0" y="0" width="4" height="4"/><rect x="5" y="0" width="4" height="4"/><rect x="10" y="0" width="4" height="4"/><rect x="0" y="5" width="4" height="4"/><rect x="5" y="5" width="4" height="4"/><rect x="10" y="5" width="4" height="4"/><rect x="0" y="10" width="4" height="4"/><rect x="5" y="10" width="4" height="4"/><rect x="10" y="10" width="4" height="4"/></g></svg>
 <div class="a" style="left:0;top:10px;width:1620px;text-align:center;font-weight:bold;color:#7c7c7c;font-size:12px">© "Группа компаний Ставтрэк" 8 (800) 505-40-23</div>
 <svg class="a" style="left:1552px;top:8px" width="16" height="15" viewBox="0 0 16 15"><path d="M8 0.5 L10.2 5.2 L15.3 5.6 L11.4 9 L12.6 14.3 L8 11.5 L3.4 14.3 L4.6 9 L0.7 5.6 L5.8 5.2 Z" fill="#8f8a23"/></svg>
 <div class="a" style="left:1577px;top:3px;width:1px;height:27px;background:#444"></div>
 <svg class="a" style="left:1589px;top:9px" width="17" height="14" viewBox="0 0 17 14"><rect x="0" y="0" width="17" height="14" fill="#8a8a8a"/><rect x="1.2" y="3" width="14.6" height="9.8" fill="#232323"/><rect x="2" y="4" width="13" height="8" fill="#8a8a8a"/><path d="M3 7 H13 M3 9.5 H8" stroke="#232323" stroke-width="1.2"/></svg>
 <div class="a" style="left:1610px;top:8px;width:30px;height:16px;border-radius:8px;background:#7d1224;color:#c78a94;font-size:11px;text-align:center;padding-top:1px">99+</div>
 <svg class="a" style="left:1651px;top:9px" width="22" height="14" viewBox="0 0 22 14"><path d="M0.5 0.5 H15.5 V13.5 H0.5 Z" fill="#4a4a4a"/><path d="M0.5 0.5 L8 7 L15.5 0.5" fill="none" stroke="#232323" stroke-width="1.4"/><path d="M14 9 H21 M18.5 6.5 L21 9 L18.5 11.5" fill="none" stroke="#4a4a4a" stroke-width="1.5"/></svg>
 <div class="a" style="left:1677px;top:8px;width:18px;height:17px;border-radius:9px;background:#3a3a3a;color:#5e5e5e;font-size:11px;text-align:center;padding-top:2px">0</div>
 <svg class="a" style="left:1707px;top:9px" width="16" height="14" viewBox="0 0 16 14"><rect x="0" y="0" width="16" height="14" fill="#4a4a4a"/><path d="M1.5 12.5 L6 7 L9 10 L11 8 L14.5 12.5 Z" fill="#232323"/><circle cx="5" cy="4" r="1.5" fill="#232323"/></svg>
 <div class="a" style="left:1727px;top:8px;width:18px;height:17px;border-radius:9px;background:#3a3a3a;color:#5e5e5e;font-size:11px;text-align:center;padding-top:2px">0</div>
 <div class="a" style="left:1758px;top:3px;width:1px;height:27px;background:#444"></div>
 <svg class="a" style="left:1768px;top:10px" width="19" height="13" viewBox="0 0 19 13"><rect x="0" y="0" width="9" height="13" fill="#4a4a4a"/><rect x="10" y="0" width="9" height="13" fill="#4a4a4a"/><path d="M1.5 3 H7.5 M1.5 6.5 H7.5 M1.5 10 H7.5" stroke="#232323" stroke-width="1.2"/></svg>
 <div class="a" style="left:1797px;top:3px;width:1px;height:27px;background:#444"></div>
 <div class="a" style="left:1817px;top:9px;color:#6a6a6a;font-size:12px">14:</div>
</div>

<!-- DIALOG -->
<div id="dlg" class="a" style="left:628px;top:240px;width:660px;height:571px;background:#fff">
 <div class="a" style="left:0;top:0;width:660px;height:25px;background:#22608e;color:#98aec2;font-weight:bold;font-size:14px;text-align:center;padding-top:5px;letter-spacing:0.1px">Свойства шаблона отчета – Отчет с топливом</div>
 <svg class="a" style="left:636px;top:10px" width="9" height="9" viewBox="0 0 9 9"><path d="M0.5 0.5 L8.5 8.5 M8.5 0.5 L0.5 8.5" stroke="#8ba3ba" stroke-width="1.1"/></svg>
 <div class="a" style="left:0;top:25px;width:660px;height:28px;background:#3a98dc;color:#fff;font-weight:bold;font-size:12px;padding:7px 0 0 10px">Свойства таблицы: Заправки</div>
 <svg class="a" style="left:636px;top:35px" width="9" height="9" viewBox="0 0 9 9"><path d="M0.5 0.5 L8.5 8.5 M8.5 0.5 L0.5 8.5" stroke="#fff" stroke-width="1.2"/></svg>
 <div class="a" style="left:10px;top:63px;width:640px;height:42px;background:#ebebeb"></div>
 <div class="a" style="left:20px;top:77px;color:#111">Имя:</div>
 <div class="a dinp" style="left:57px;top:73px;width:163px">Заправки</div>
 <div class="a" style="left:230px;top:77px;color:#111">Тип:</div>
 <div class="a dinp" style="left:263px;top:73px;width:191px">Заправки<div class="dd" style="border-top-color:#111;top:8px;right:6px;border-left-width:4px;border-right-width:4px;border-top-width:5px"></div></div>
 <div class="a dinp" style="left:474px;top:73px;width:166px;color:#a8a8a8;padding-left:21px">Поиск</div>
 <svg class="a" style="left:481px;top:78px" width="12" height="12" viewBox="0 0 12 12"><circle cx="4.8" cy="4.8" r="3.8" fill="none" stroke="#555" stroke-width="1.1"/><path d="M7.5 7.5 L11 11" stroke="#555" stroke-width="1.3"/></svg>
 <div class="a" style="left:235px;top:115px;width:190px;height:21px;border:1px solid #a8a8a8;border-radius:3px;overflow:hidden;background:#fff">
   <div class="a" style="left:0;top:0;width:95px;height:19px;background:#3a98dc;color:#fff;text-align:center;padding-top:3px">Столбцы</div>
   <div class="a" style="left:95px;top:0;width:93px;height:19px;border-left:1px solid #a8a8a8;color:#3d78a6;text-align:center;padding-top:3px">Настройки</div>
 </div>
 <div class="a" style="left:10px;top:147px;width:640px;height:377px;overflow:hidden;border-top:1px solid #cdcdcd">
  <div class="row" style="top:0px">
   <svg class="a" style="left:6px;top:7px" width="7" height="16" viewBox="0 0 7 16"><path d="M3.5 2 V14" stroke="#2d8ad6" stroke-width="1.6"/><path d="M0.3 4.5 L3.5 0.5 L6.7 4.5 Z M0.3 11.5 L3.5 15.5 L6.7 11.5 Z" fill="#2d8ad6"/></svg>
   <div class="cbx on"><svg width="12" height="12" viewBox="0 0 12 12" style="position:absolute;left:0;top:0"><path d="M3 6.2 L5.1 8.3 L9.2 3.8" fill="none" stroke="#fff" stroke-width="1.6"/></svg></div>
   <div class="a" style="left:38px;top:8px;color:#111">Время</div>
   <svg class="a" style="left:613px;top:10px" width="13" height="11" viewBox="0 0 13 11"><path d="M3.5 3.3 H8 C10 3.3 11.3 4.7 11.3 6.6 C11.3 8.5 10 9.9 8 9.9 H4" fill="none" stroke="#b4b4b4" stroke-width="1.7"/><path d="M0.3 3.3 L3.9 0 V6.6 Z" fill="#b4b4b4"/></svg>
  </div>
  <div class="row" style="top:30px">
   <svg class="a" style="left:6px;top:7px" width="7" height="16" viewBox="0 0 7 16"><path d="M3.5 2 V14" stroke="#2d8ad6" stroke-width="1.6"/><path d="M0.3 4.5 L3.5 0.5 L6.7 4.5 Z M0.3 11.5 L3.5 15.5 L6.7 11.5 Z" fill="#2d8ad6"/></svg>
   <div class="cbx on"><svg width="12" height="12" viewBox="0 0 12 12" style="position:absolute;left:0;top:0"><path d="M3 6.2 L5.1 8.3 L9.2 3.8" fill="none" stroke="#fff" stroke-width="1.6"/></svg></div>
   <div class="a" style="left:38px;top:8px;color:#111">Положение</div>
   <svg class="a" style="left:613px;top:10px" width="13" height="11" viewBox="0 0 13 11"><path d="M3.5 3.3 H8 C10 3.3 11.3 4.7 11.3 6.6 C11.3 8.5 10 9.9 8 9.9 H4" fill="none" stroke="#b4b4b4" stroke-width="1.7"/><path d="M0.3 3.3 L3.9 0 V6.6 Z" fill="#b4b4b4"/></svg>
  </div>
  <div class="row" style="top:60px">
   <svg class="a" style="left:6px;top:7px" width="7" height="16" viewBox="0 0 7 16"><path d="M3.5 2 V14" stroke="#2d8ad6" stroke-width="1.6"/><path d="M0.3 4.5 L3.5 0.5 L6.7 4.5 Z M0.3 11.5 L3.5 15.5 L6.7 11.5 Z" fill="#2d8ad6"/></svg>
   <div class="cbx on"><svg width="12" height="12" viewBox="0 0 12 12" style="position:absolute;left:0;top:0"><path d="M3 6.2 L5.1 8.3 L9.2 3.8" fill="none" stroke="#fff" stroke-width="1.6"/></svg></div>
   <div class="a" style="left:38px;top:8px;color:#111">Нач. уровень</div>
   <svg class="a" style="left:613px;top:10px" width="13" height="11" viewBox="0 0 13 11"><path d="M3.5 3.3 H8 C10 3.3 11.3 4.7 11.3 6.6 C11.3 8.5 10 9.9 8 9.9 H4" fill="none" stroke="#b4b4b4" stroke-width="1.7"/><path d="M0.3 3.3 L3.9 0 V6.6 Z" fill="#b4b4b4"/></svg>
  </div>
  <div class="row" style="top:90px">
   <svg class="a" style="left:6px;top:7px" width="7" height="16" viewBox="0 0 7 16"><path d="M3.5 2 V14" stroke="#2d8ad6" stroke-width="1.6"/><path d="M0.3 4.5 L3.5 0.5 L6.7 4.5 Z M0.3 11.5 L3.5 15.5 L6.7 11.5 Z" fill="#2d8ad6"/></svg>
   <div class="cbx on"><svg width="12" height="12" viewBox="0 0 12 12" style="position:absolute;left:0;top:0"><path d="M3 6.2 L5.1 8.3 L9.2 3.8" fill="none" stroke="#fff" stroke-width="1.6"/></svg></div>
   <div class="a" style="left:38px;top:8px;color:#111">Заправлено</div>
   <svg class="a" style="left:613px;top:10px" width="13" height="11" viewBox="0 0 13 11"><path d="M3.5 3.3 H8 C10 3.3 11.3 4.7 11.3 6.6 C11.3 8.5 10 9.9 8 9.9 H4" fill="none" stroke="#b4b4b4" stroke-width="1.7"/><path d="M0.3 3.3 L3.9 0 V6.6 Z" fill="#b4b4b4"/></svg>
  </div>
  <div class="row" style="top:120px">
   <svg class="a" style="left:6px;top:7px" width="7" height="16" viewBox="0 0 7 16"><path d="M3.5 2 V14" stroke="#2d8ad6" stroke-width="1.6"/><path d="M0.3 4.5 L3.5 0.5 L6.7 4.5 Z M0.3 11.5 L3.5 15.5 L6.7 11.5 Z" fill="#2d8ad6"/></svg>
   <div class="cbx on"><svg width="12" height="12" viewBox="0 0 12 12" style="position:absolute;left:0;top:0"><path d="M3 6.2 L5.1 8.3 L9.2 3.8" fill="none" stroke="#fff" stroke-width="1.6"/></svg></div>
   <div class="a" style="left:38px;top:8px;color:#111">Конеч. уровень</div>
   <svg class="a" style="left:613px;top:10px" width="13" height="11" viewBox="0 0 13 11"><path d="M3.5 3.3 H8 C10 3.3 11.3 4.7 11.3 6.6 C11.3 8.5 10 9.9 8 9.9 H4" fill="none" stroke="#333" stroke-width="1.7"/><path d="M0.3 3.3 L3.9 0 V6.6 Z" fill="#333"/></svg>
  </div>
  <div class="row" style="top:150px">
   <svg class="a" style="left:6px;top:7px" width="7" height="16" viewBox="0 0 7 16"><path d="M3.5 2 V14" stroke="#2d8ad6" stroke-width="1.6"/><path d="M0.3 4.5 L3.5 0.5 L6.7 4.5 Z M0.3 11.5 L3.5 15.5 L6.7 11.5 Z" fill="#2d8ad6"/></svg>
   <div class="cbx on"><svg width="12" height="12" viewBox="0 0 12 12" style="position:absolute;left:0;top:0"><path d="M3 6.2 L5.1 8.3 L9.2 3.8" fill="none" stroke="#fff" stroke-width="1.6"/></svg></div>
   <div class="a" style="left:38px;top:8px;color:#111">Кол-во</div>
   <svg class="a" style="left:613px;top:10px" width="13" height="11" viewBox="0 0 13 11"><path d="M3.5 3.3 H8 C10 3.3 11.3 4.7 11.3 6.6 C11.3 8.5 10 9.9 8 9.9 H4" fill="none" stroke="#b4b4b4" stroke-width="1.7"/><path d="M0.3 3.3 L3.9 0 V6.6 Z" fill="#b4b4b4"/></svg>
  </div>
  <div class="row" style="top:180px">
   <svg class="a" style="left:6px;top:7px" width="7" height="16" viewBox="0 0 7 16"><path d="M3.5 2 V14" stroke="#2d8ad6" stroke-width="1.6"/><path d="M0.3 4.5 L3.5 0.5 L6.7 4.5 Z M0.3 11.5 L3.5 15.5 L6.7 11.5 Z" fill="#2d8ad6"/></svg>
   <div class="cbx"></div>
   <div class="a" style="left:38px;top:8px;color:#111">Зарегистрировано</div>
   <svg class="a" style="left:613px;top:10px" width="13" height="11" viewBox="0 0 13 11"><path d="M3.5 3.3 H8 C10 3.3 11.3 4.7 11.3 6.6 C11.3 8.5 10 9.9 8 9.9 H4" fill="none" stroke="#b4b4b4" stroke-width="1.7"/><path d="M0.3 3.3 L3.9 0 V6.6 Z" fill="#b4b4b4"/></svg>
  </div>
  <div class="row" style="top:210px">
   <svg class="a" style="left:6px;top:7px" width="7" height="16" viewBox="0 0 7 16"><path d="M3.5 2 V14" stroke="#2d8ad6" stroke-width="1.6"/><path d="M0.3 4.5 L3.5 0.5 L6.7 4.5 Z M0.3 11.5 L3.5 15.5 L6.7 11.5 Z" fill="#2d8ad6"/></svg>
   <div class="cbx"></div>
   <div class="a" style="left:38px;top:8px;color:#111">Разница</div>
   <svg class="a" style="left:613px;top:10px" width="13" height="11" viewBox="0 0 13 11"><path d="M3.5 3.3 H8 C10 3.3 11.3 4.7 11.3 6.6 C11.3 8.5 10 9.9 8 9.9 H4" fill="none" stroke="#b4b4b4" stroke-width="1.7"/><path d="M0.3 3.3 L3.9 0 V6.6 Z" fill="#b4b4b4"/></svg>
  </div>
  <div class="row" style="top:240px">
   <svg class="a" style="left:6px;top:7px" width="7" height="16" viewBox="0 0 7 16"><path d="M3.5 2 V14" stroke="#2d8ad6" stroke-width="1.6"/><path d="M0.3 4.5 L3.5 0.5 L6.7 4.5 Z M0.3 11.5 L3.5 15.5 L6.7 11.5 Z" fill="#2d8ad6"/></svg>
   <div class="cbx"></div>
   <div class="a" style="left:38px;top:8px;color:#111">Описание</div>
   <svg class="a" style="left:613px;top:10px" width="13" height="11" viewBox="0 0 13 11"><path d="M3.5 3.3 H8 C10 3.3 11.3 4.7 11.3 6.6 C11.3 8.5 10 9.9 8 9.9 H4" fill="none" stroke="#b4b4b4" stroke-width="1.7"/><path d="M0.3 3.3 L3.9 0 V6.6 Z" fill="#b4b4b4"/></svg>
  </div>
  <div class="row" style="top:270px">
   <svg class="a" style="left:6px;top:7px" width="7" height="16" viewBox="0 0 7 16"><path d="M3.5 2 V14" stroke="#2d8ad6" stroke-width="1.6"/><path d="M0.3 4.5 L3.5 0.5 L6.7 4.5 Z M0.3 11.5 L3.5 15.5 L6.7 11.5 Z" fill="#2d8ad6"/></svg>
   <div class="cbx"></div>
   <div class="a" style="left:38px;top:8px;color:#111">Имя датчика</div>
   <svg class="a" style="left:613px;top:10px" width="13" height="11" viewBox="0 0 13 11"><path d="M3.5 3.3 H8 C10 3.3 11.3 4.7 11.3 6.6 C11.3 8.5 10 9.9 8 9.9 H4" fill="none" stroke="#b4b4b4" stroke-width="1.7"/><path d="M0.3 3.3 L3.9 0 V6.6 Z" fill="#b4b4b4"/></svg>
  </div>
  <div class="row" style="top:300px">
   <svg class="a" style="left:6px;top:7px" width="7" height="16" viewBox="0 0 7 16"><path d="M3.5 2 V14" stroke="#2d8ad6" stroke-width="1.6"/><path d="M0.3 4.5 L3.5 0.5 L6.7 4.5 Z M0.3 11.5 L3.5 15.5 L6.7 11.5 Z" fill="#2d8ad6"/></svg>
   <div class="cbx"></div>
   <div class="a" style="left:38px;top:8px;color:#111">Водитель</div>
   <svg class="a" style="left:613px;top:10px" width="13" height="11" viewBox="0 0 13 11"><path d="M3.5 3.3 H8 C10 3.3 11.3 4.7 11.3 6.6 C11.3 8.5 10 9.9 8 9.9 H4" fill="none" stroke="#b4b4b4" stroke-width="1.7"/><path d="M0.3 3.3 L3.9 0 V6.6 Z" fill="#b4b4b4"/></svg>
  </div>
  <div class="row" style="top:330px">
   <svg class="a" style="left:6px;top:7px" width="7" height="16" viewBox="0 0 7 16"><path d="M3.5 2 V14" stroke="#2d8ad6" stroke-width="1.6"/><path d="M0.3 4.5 L3.5 0.5 L6.7 4.5 Z M0.3 11.5 L3.5 15.5 L6.7 11.5 Z" fill="#2d8ad6"/></svg>
   <div class="cbx"></div>
   <div class="a" style="left:38px;top:8px;color:#111">Прицеп</div>
   <svg class="a" style="left:613px;top:10px" width="13" height="11" viewBox="0 0 13 11"><path d="M3.5 3.3 H8 C10 3.3 11.3 4.7 11.3 6.6 C11.3 8.5 10 9.9 8 9.9 H4" fill="none" stroke="#b4b4b4" stroke-width="1.7"/><path d="M0.3 3.3 L3.9 0 V6.6 Z" fill="#b4b4b4"/></svg>
  </div>
  <div class="row" style="top:360px">
   <svg class="a" style="left:6px;top:7px" width="7" height="16" viewBox="0 0 7 16"><path d="M3.5 2 V14" stroke="#2d8ad6" stroke-width="1.6"/><path d="M0.3 4.5 L3.5 0.5 L6.7 4.5 Z M0.3 11.5 L3.5 15.5 L6.7 11.5 Z" fill="#2d8ad6"/></svg>
   <div class="cbx"></div>
   <div class="a" style="left:38px;top:8px;color:#111">Счетчик</div>
   <svg class="a" style="left:613px;top:10px" width="13" height="11" viewBox="0 0 13 11"><path d="M3.5 3.3 H8 C10 3.3 11.3 4.7 11.3 6.6 C11.3 8.5 10 9.9 8 9.9 H4" fill="none" stroke="#b4b4b4" stroke-width="1.7"/><path d="M0.3 3.3 L3.9 0 V6.6 Z" fill="#b4b4b4"/></svg>
  </div>
 </div>
 <div class="a dbtn" style="left:10px;top:539px;width:144px">Добавить калькулятор</div>
 <svg class="a" style="left:161px;top:542px" width="17" height="17" viewBox="0 0 17 17"><circle cx="8.5" cy="8.5" r="7.6" fill="none" stroke="#777" stroke-width="1"/><text x="8.5" y="12.6" text-anchor="middle" font-family="Liberation Sans" font-size="11.5" fill="#777">?</text></svg>
 <div class="a dbtn" style="left:500px;top:539px;width:70px">Отмена</div>
 <div class="a dbtn" style="left:580px;top:539px;width:70px">OK</div>
</div>

</body></html>
